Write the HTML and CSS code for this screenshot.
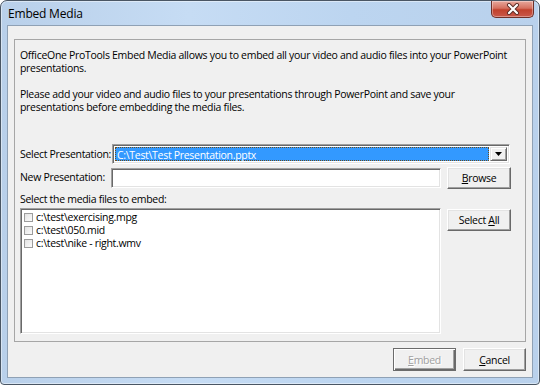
FILE: index.html
```html
<!DOCTYPE html>
<html>
<head>
    <title>Embed Media</title>
    <meta charset="UTF-8">
    <link rel="stylesheet" href="styles.css">
</head>
<body>
    <div class="window">
        <div class="titlebar">
            <span class="title">Embed Media</span>
            <div class="close">
                <svg width="14" height="12" viewBox="0 0 14 12">
                    <path d="M3 2 L11 10 M11 2 L3 10" stroke="#5a2a24" stroke-width="4" stroke-linecap="round"/>
                    <path d="M3 2 L11 10 M11 2 L3 10" stroke="#fff" stroke-width="2.2" stroke-linecap="round"/>
                </svg>
            </div>
        </div>
        <div class="client">
            <div class="panel">
                <p>OfficeOne ProTools Embed Media allows you to embed all your video and audio files into your PowerPoint<br>presentations.</p>
                <p>Please add your video and audio files to your presentations through PowerPoint and save your<br>presentations before embedding the media files.</p>

                <div class="fields">
                    <span class="lbl">Select Presentation:</span>
                    <div class="combo">
                        <span class="combo-value">C:\Test\Test Presentation.pptx</span>
                        <span class="combo-arrow">
                            <svg width="7" height="4" viewBox="0 0 7 4"><path d="M0 0 H7 L3.5 4 Z" fill="#000"/></svg>
                        </span>
                    </div>

                    <span class="lbl">New Presentation:</span>
                    <div class="textbox"></div>
                    <button class="btn"><u>B</u>rowse</button>

                    <span class="lbl list-lbl">Select the media files to embed:</span>

                    <div class="listbox">
                        <div class="item"><span class="check"></span>c:\test\exercising.mpg</div>
                        <div class="item"><span class="check"></span>c:\test\050.mid</div>
                        <div class="item"><span class="check"></span>c:\test\nike - right.wmv</div>
                    </div>
                    <button class="btn btn-top">Select <u>A</u>ll</button>
                </div>
            </div>

            <div class="actions">
                <button class="btn btn-default" disabled><u>E</u>mbed</button>
                <button class="btn"><u>C</u>ancel</button>
            </div>
        </div>
    </div>
</body>
</html>
```

FILE: styles.css
```css
body {
    margin: 0;
    background-color: #ffffff;
    font-family: 'Open Sans', 'Noto Sans', sans-serif;
    font-size: 10.5px;
    letter-spacing: -0.3px;
    color: #000;
}
.window {
    width: 540px;
    height: 385px;
    box-sizing: border-box;
    border: 1px solid #4a5664;
    border-radius: 7px 7px 4px 4px;
    padding: 0 6px 6px 6px;
    background: linear-gradient(to right, #b9d0ea 0%, #c6dcf4 35%, #bcd5f0 65%, #b9d1ec 100%);
    box-shadow: inset 0 0 0 1px rgba(255,255,255,0.45);
}
.titlebar {
    height: 24px;
    display: flex;
    align-items: flex-start;
}
.title {
    font-size: 12px;
    letter-spacing: -0.2px;
    line-height: 12px;
    margin: 7px 0 0 1px;
    color: #000;
}
.close {
    margin-left: auto;
    margin-right: -1px;
    width: 43px;
    height: 17px;
    box-sizing: border-box;
    border: 1px solid #6e2f28;
    border-top: none;
    border-radius: 0 0 5px 5px;
    background: linear-gradient(#e7a89c 0%, #d5705f 45%, #c1412d 55%, #c9584a 100%);
    box-shadow: inset 0 0 0 1px rgba(255,255,255,0.35);
    display: flex;
    align-items: center;
    justify-content: center;
}
.client {
    height: 353px;
    box-sizing: border-box;
    border: 1px solid #8fa1b5;
    background-color: #f0f0f0;
    padding: 13px 6px 0 6px;
}
.panel {
    border: 1px solid #a6a6a6;
    padding: 9px 5px 7px 5px;
}
.panel p {
    margin: 0 0 13px 0;
    line-height: 13px;
    white-space: nowrap;
}
.fields {
    margin-top: 30px;
    display: grid;
    grid-template-columns: 85px 330px 64px;
    grid-template-rows: 23px 22px 19px 126px;
    column-gap: 6px;
}
.lbl {
    line-height: 20px;
    white-space: nowrap;
}
.list-lbl {
    grid-column: 1 / 4;
    line-height: 13px;
    padding-top: 4px;
}
.combo,
.textbox,
.listbox {
    box-sizing: border-box;
    border: 1px solid;
    border-color: #a0a0a0 #ffffff #ffffff #a0a0a0;
    box-shadow: inset 1px 1px 0 #696969, inset -1px -1px 0 #e3e3e3;
    background-color: #fff;
}
.combo {
    grid-column: 2 / 4;
    height: 20px;
    margin-left: 1px;
    margin-right: 1px;
    padding: 2px;
    display: flex;
}
.combo-value {
    flex: 1;
    margin-right: 1px;
    background-color: #3399ff;
    color: #fff;
    border: 1px dotted #6b4d1d;
    line-height: 14px;
    padding-left: 1px;
}
.combo-arrow {
    width: 17px;
    box-sizing: border-box;
    background-color: #f0f0f0;
    border: 1px solid;
    border-color: #e3e3e3 #696969 #696969 #e3e3e3;
    box-shadow: inset 1px 1px 0 #fff, inset -1px -1px 0 #a0a0a0;
    display: flex;
    align-items: center;
    justify-content: center;
}
.textbox {
    height: 20px;
    align-self: center;
}
.listbox {
    grid-column: 1 / 3;
    padding: 2px 0;
}
.item {
    height: 13px;
    line-height: 13px;
    display: flex;
    align-items: center;
    padding-left: 3px;
    white-space: nowrap;
}
.check {
    width: 9px;
    height: 9px;
    box-sizing: border-box;
    border: 1px solid #9c9c9c;
    background: linear-gradient(135deg, #e2e2e2, #fbfbfb);
    margin-right: 3px;
}
.btn {
    font-family: 'Open Sans', 'Noto Sans', sans-serif;
    font-size: 10.5px;
    letter-spacing: -0.3px;
    color: #000;
    height: 22px;
    padding: 0;
    box-sizing: border-box;
    background-color: #f0f0f0;
    border: 1px solid;
    border-color: #ffffff #696969 #696969 #ffffff;
    box-shadow: inset -1px -1px 0 #a0a0a0, inset 1px 1px 0 #e3e3e3;
    border-radius: 0;
}
.btn-top {
    align-self: start;
    margin-top: 1px;
}
.actions {
    display: flex;
    justify-content: flex-end;
    gap: 7px;
    margin-top: 6px;
}
.actions .btn {
    width: 63px;
    height: 23px;
}
.btn-default {
    border-color: #6b6b6b;
    box-shadow: inset 1px 1px 0 #fff, inset -1px -1px 0 #696969, inset -2px -2px 0 #a0a0a0;
}
.btn:disabled {
    color: #a0a0a0;
    text-shadow: 1px 1px 0 #fff;
}
```
